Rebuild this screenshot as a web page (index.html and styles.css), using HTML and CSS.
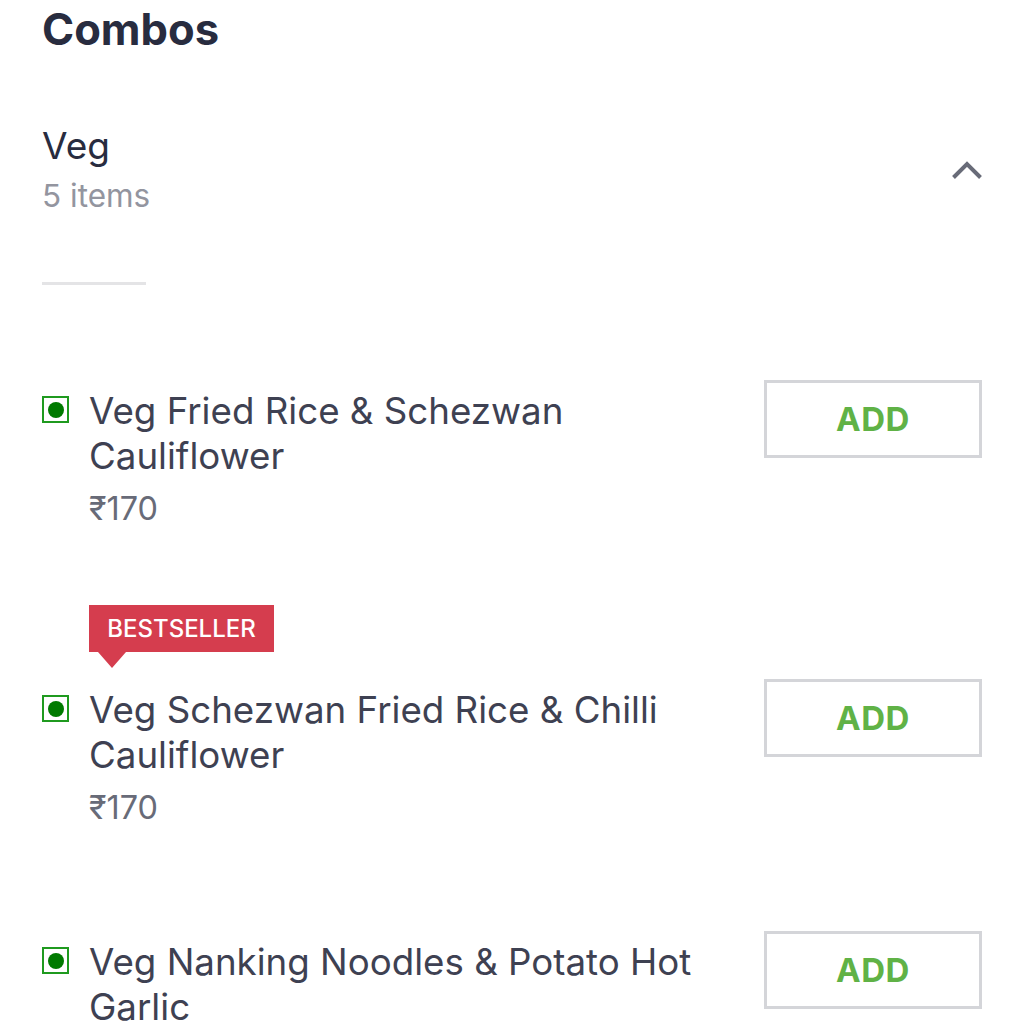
FILE: index.html
```html
<!DOCTYPE html>
<html lang="en">
  <head>
    <meta charset="UTF-8" />
    <title>Combos</title>
    <link rel="stylesheet" href="styles.css">
  </head>
  <body>
    <h1 class="section-title">Combos</h1>

    <div class="group-header">
      <div>
        <div class="group-name">Veg</div>
        <div class="group-count">5 items</div>
      </div>
      <svg class="chevron" width="30" height="18" viewBox="0 0 30 18">
        <path d="M1.5 16.5 L15 3 L28.5 16.5" fill="none" stroke="#686b78" stroke-width="4" />
      </svg>
    </div>
    <div class="divider"></div>

    <div class="item item-first">
      <span class="veg-mark"><span class="veg-dot"></span></span>
      <div class="item-info">
        <div class="item-name">Veg Fried Rice &amp; Schezwan Cauliflower</div>
        <div class="item-price">₹170</div>
      </div>
      <button class="add-btn">ADD</button>
    </div>

    <div class="item item-second">
      <span class="veg-mark"><span class="veg-dot"></span></span>
      <div class="item-info">
        <div class="badge">BESTSELLER</div>
        <div class="item-name">Veg Schezwan Fried Rice &amp; Chilli Cauliflower</div>
        <div class="item-price">₹170</div>
      </div>
      <button class="add-btn">ADD</button>
    </div>

    <div class="item item-third">
      <span class="veg-mark"><span class="veg-dot"></span></span>
      <div class="item-info">
        <div class="item-name">Veg Nanking Noodles &amp; Potato Hot Garlic</div>
      </div>
      <button class="add-btn">ADD</button>
    </div>
  </body>
</html>
```

FILE: styles.css
```css
html,
body {
  height: 1024px;
  overflow: hidden;
}

body {
  margin: 0;
  padding: 0 42px;
  background: #fff;
  font-family: 'Inter', 'Open Sans', sans-serif;
  color: #3e4152;
}

.section-title {
  margin: 0;
  padding-top: 4px;
  font-size: 43.5px;
  line-height: 50px;
  font-weight: 700;
  color: #282c3f;
}

.group-header {
  display: flex;
  justify-content: space-between;
  align-items: center;
  margin-top: 70px;
}

.group-name {
  font-size: 37px;
  line-height: 44px;
  color: #282c3f;
}

.group-count {
  margin-top: 8px;
  font-size: 31.5px;
  line-height: 40px;
  color: #93959f;
}

.divider {
  width: 104px;
  height: 3px;
  margin-top: 66px;
  background: #e4e4e6;
}

.item {
  display: flex;
  align-items: flex-start;
}

.item-first {
  margin-top: 95px;
}

.item-second {
  margin-top: 75px;
}

.item-third {
  margin-top: 102px;
}

.veg-mark {
  flex: none;
  display: flex;
  align-items: center;
  justify-content: center;
  width: 27px;
  height: 27px;
  margin-top: 16px;
  margin-right: 20px;
  box-sizing: border-box;
  border: 2px solid #1f9a1f;
}

.item-second .veg-mark {
  margin-top: 90px;
}

.veg-dot {
  width: 16px;
  height: 16px;
  border-radius: 50%;
  background: #007a00;
}

.item-info {
  flex: 1;
  padding-top: 8px;
}

.item-second .item-info {
  padding-top: 0;
}

.item-name {
  width: 620px;
  font-size: 36.7px;
  line-height: 45px;
}

.item-price {
  margin-top: 10px;
  font-size: 32.4px;
  line-height: 42px;
  color: #686b78;
}

.badge {
  position: relative;
  width: 185px;
  height: 47px;
  margin-bottom: 35px;
  background: #d53d4e;
  color: #fff;
  font-size: 24px;
  font-weight: 500;
  line-height: 47px;
  text-align: center;
}

.badge::after {
  content: '';
  position: absolute;
  left: 9px;
  top: 47px;
  border-left: 14px solid transparent;
  border-right: 14px solid transparent;
  border-top: 16px solid #d53d4e;
}

.add-btn {
  flex: none;
  width: 218px;
  height: 78px;
  background: #fff;
  border: 3px solid #d4d5d9;
  color: #60b246;
  font-family: inherit;
  font-size: 33px;
  font-weight: 700;
  letter-spacing: 0.5px;
}

.item-second .add-btn {
  margin-top: 74px;
}
```
